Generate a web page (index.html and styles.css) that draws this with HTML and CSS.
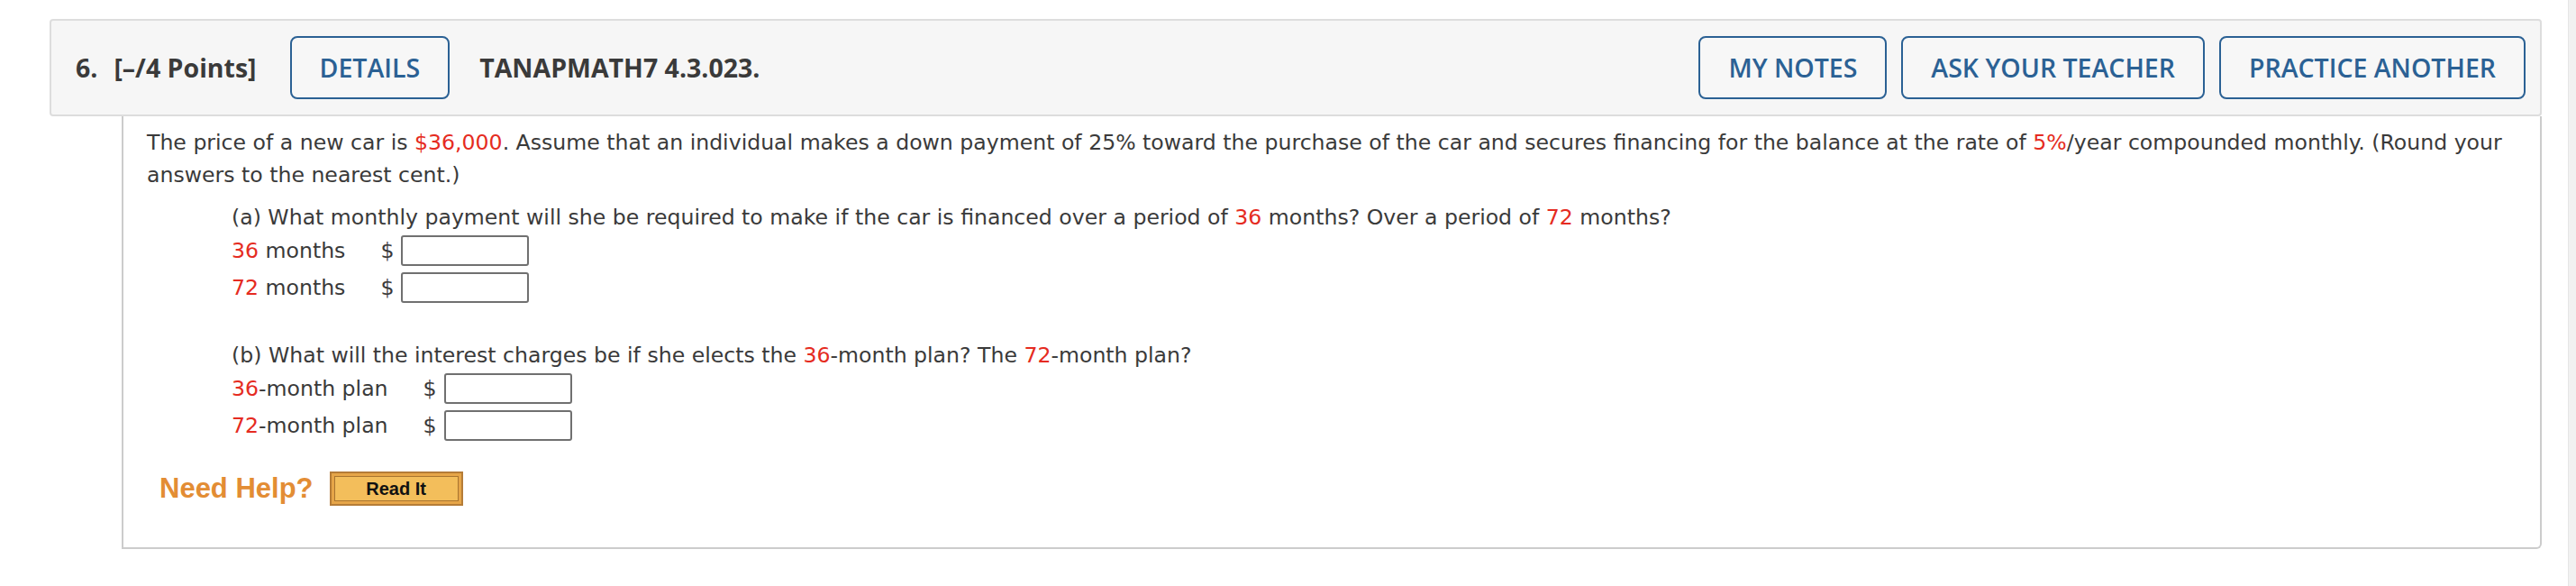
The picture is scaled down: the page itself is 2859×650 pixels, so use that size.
FILE: index.html
```html
<!DOCTYPE html>
<html lang="en">
<head>
<meta charset="utf-8">
<title>Question 6</title>
<link rel="stylesheet" href="styles.css">
</head>
<body>
<div class="page">
  <div class="main">
    <div class="qhead">
      <span class="qnum">6.</span>
      <span class="pts">[–/4 Points]</span>
      <button class="btn details">DETAILS</button>
      <span class="qid">TANAPMATH7 4.3.023.</span>
      <div class="actions">
        <button class="btn">MY NOTES</button>
        <button class="btn">ASK YOUR TEACHER</button>
        <button class="btn">PRACTICE ANOTHER</button>
      </div>
    </div>
    <div class="qbody">
      <p class="intro">The price of a new car is <span class="red">$36,000</span>. Assume that an individual makes a down payment of 25% toward the purchase of the car and secures financing for the balance at the rate of <span class="red">5%</span>/year compounded monthly. (Round your answers to the nearest cent.)</p>
      <div class="part part-a">
        <p class="prompt">(a) What monthly payment will she be required to make if the car is financed over a period of <span class="red">36</span> months? Over a period of <span class="red">72</span> months?</p>
        <div class="answers">
          <span class="lbl"><span class="red">36</span> months</span><span class="cur">$</span><span class="box"></span>
          <span class="lbl"><span class="red">72</span> months</span><span class="cur">$</span><span class="box"></span>
        </div>
      </div>
      <div class="part part-b">
        <p class="prompt">(b) What will the interest charges be if she elects the <span class="red">36</span>-month plan? The <span class="red">72</span>-month plan?</p>
        <div class="answers">
          <span class="lbl"><span class="red">36</span>-month plan</span><span class="cur">$</span><span class="box"></span>
          <span class="lbl"><span class="red">72</span>-month plan</span><span class="cur">$</span><span class="box"></span>
        </div>
      </div>
      <div class="help">
        <span class="needhelp">Need Help?</span>
        <span class="readit"><span class="readit-inner">Read It</span></span>
      </div>
    </div>
  </div>
  <div class="track"></div>
</div>
</body>
</html>
```
FILE: styles.css
```css
* { box-sizing: border-box; }
html, body { margin: 0; padding: 0; background: #ffffff; }
body { height: 650px; overflow: hidden; }

.page {
  display: flex;
  height: 650px;
}
.main {
  flex: 1;
  padding: 21px 29px 0 55px;
}
.track {
  width: 9px;
  background: #f1f1f1;
  border-left: 1px solid #e6e6e6;
}

/* header */
.qhead {
  display: flex;
  align-items: center;
  height: 108px;
  padding: 0 16px 0 27px;
  background: #f6f6f6;
  border: 2px solid #dddddd;
  border-radius: 4px;
  font-family: "Open Sans", "Noto Sans", sans-serif;
  font-size: 28.5px;
  color: #3a3a3a;
}
.qnum { font-weight: 700; margin-right: 18px; }
.pts { font-weight: 700; margin-right: 37px; }
.qid { font-weight: 700; margin-left: 33px; }
.actions {
  margin-left: auto;
  display: flex;
  gap: 16px;
}
.btn {
  height: 70px;
  padding: 0 31px;
  background: #f7f7f7;
  border: 2px solid #2b6194;
  border-radius: 8px;
  color: #2b6194;
  font-family: "Open Sans", "Noto Sans", sans-serif;
  font-size: 28.5px;
  font-weight: 600;
  line-height: 1;
}

/* body */
.qbody {
  margin-left: 80px;
  height: 480px;
  padding: 11px 20px 0 26px;
  border: 2px solid #cccccc;
  border-top: none;
  border-radius: 0 0 6px 0;
  font-family: Verdana, "DejaVu Sans", sans-serif;
  font-size: 23.6px;
  line-height: 36px;
  color: #3a3a3a;
}
.red { color: #e52b21; }
.intro { margin: 0; }
.part { margin-left: 94px; }
.part-a { margin-top: 11px; }
.part-b { margin-top: 39px; }
.prompt { margin: 0; }
.answers {
  display: grid;
  grid-template-columns: auto auto auto;
  justify-content: start;
  align-items: center;
  row-gap: 5px;
  margin-top: 1px;
}
.lbl { padding-right: 39px; }
.cur { padding-right: 8px; }
.box {
  display: block;
  width: 142px;
  height: 34px;
  border: 2px solid #707070;
  border-radius: 3px;
  background: #fff;
}

.help {
  display: flex;
  align-items: center;
  margin-top: 33px;
  margin-left: 14px;
  gap: 18px;
}
.needhelp {
  font-family: "Liberation Sans", Arial, sans-serif;
  font-weight: 700;
  font-size: 31px;
  color: #e38d34;
}
.readit {
  display: block;
  width: 148px;
  height: 38px;
  padding: 3px;
  background: #e6a548;
  border: 2px solid #b57c37;
}
.readit-inner {
  display: flex;
  align-items: center;
  justify-content: center;
  height: 100%;
  background: #f3be5b;
  border: 1px solid #a8742f;
  font-family: "Liberation Sans", Arial, sans-serif;
  font-weight: 700;
  font-size: 20px;
  color: #111;
}
```
